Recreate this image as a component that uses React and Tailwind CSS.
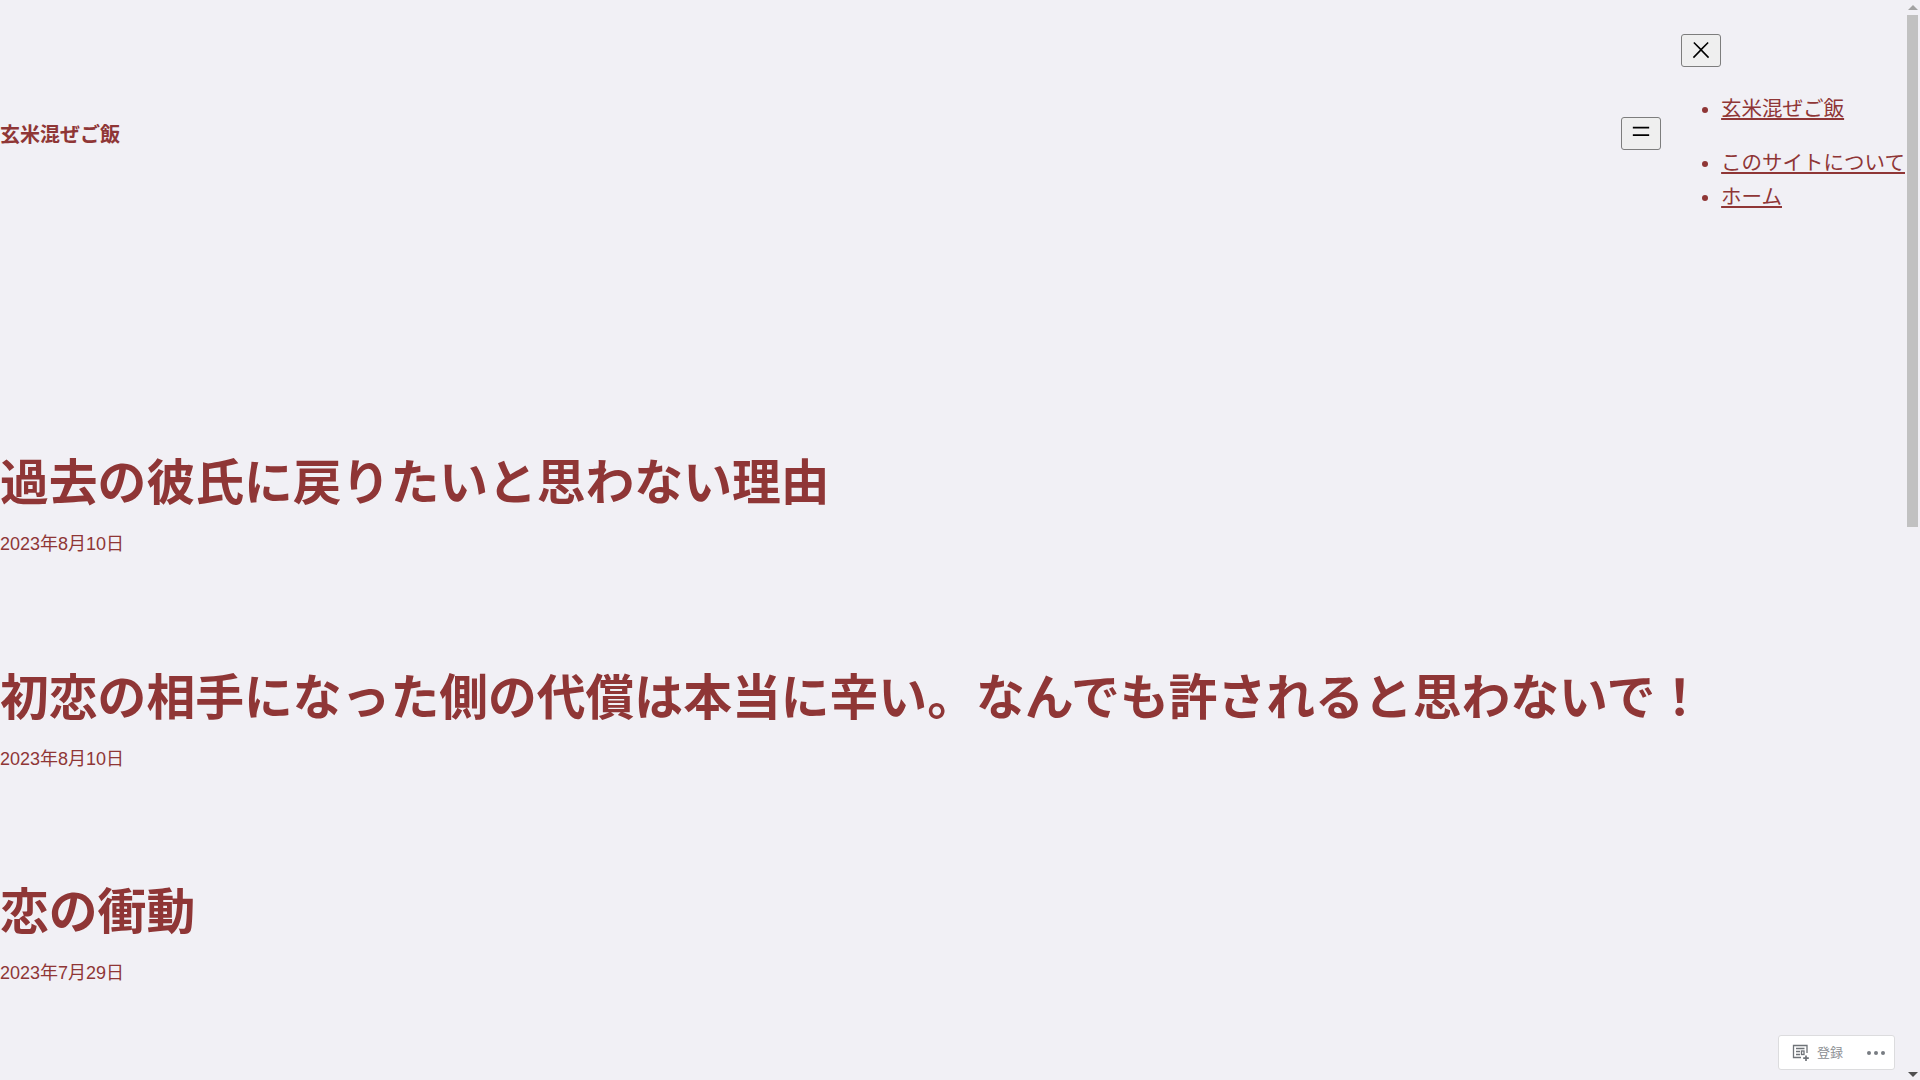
const posts = [
    { title: '過去の彼氏に戻りたいと思わない理由', date: '2023年8月10日' },
    { title: '初恋の相手になった側の代償は本当に辛い。なんでも許されると思わないで！', date: '2023年8月10日' },
    { title: '恋の衝動', date: '2023年7月29日' },
];

const menu = [
    { label: '玄米混ぜご飯', cls: 'mt-0' },
    { label: 'このサイトについて', cls: 'mt-[20px]' },
    { label: 'ホーム', cls: 'mt-0' },
];

function Scrollbar() {
    return (
        <div className="w-[15px] shrink-0 h-full flex flex-col items-center bg-[#f1f0f5] relative">
            <div className="w-0 h-0 mt-[5px] border-x-[5px] border-x-transparent border-b-[5px] border-b-[#a3a3a3]" />
            <div className="w-[11px] h-[512px] mt-[5px] bg-[#c1c1c1]" />
            <div className="absolute bottom-[3px] w-0 h-0 border-x-[5px] border-x-transparent border-t-[5px] border-t-[#505050]" />
        </div>
    );
}

function ActionBar() {
    return (
        <div className="absolute right-[25px] bottom-[10px] w-[117px] h-[35px] bg-white rounded-[3px] border border-[#dcdcde] flex items-center pl-[13px] text-[#8c8f94]">
            <svg width="18" height="18" viewBox="0 0 18 18" className="shrink-0 text-[#6f7378]" fill="none" stroke="currentColor" strokeWidth="1.3">
                <path d="M15 9V1.5H1.5v12H9" />
                <path d="M4 4.5h8.5M4 7.5h4M4 10.5h4" />
                <rect x="9.5" y="7" width="2.5" height="3.5" />
                <path d="M14 11.5v5.5M11.2 14.2h5.6" strokeWidth="1.7" />
            </svg>
            <span className="ml-[7px] text-[13px] leading-none">登録</span>
            <div className="ml-auto mr-[9px] flex gap-[3px]">
                <span className="w-[4px] h-[4px] rounded-full bg-[#787c82]" />
                <span className="w-[4px] h-[4px] rounded-full bg-[#787c82]" />
                <span className="w-[4px] h-[4px] rounded-full bg-[#787c82]" />
            </div>
        </div>
    );
}

export default function App() {
    return (
        <div className="h-screen overflow-hidden flex relative bg-[#f1f0f5] text-[#8f3636] font-['Liberation_Sans','Noto_Sans_CJK_JP',sans-serif]">
            <div className="flex-1 min-w-0">
                <header className="flex items-start justify-between h-[420px]">
                    <p className="mt-[123px] text-[20px] leading-[24px] font-bold">玄米混ぜご飯</p>
                    <div className="flex items-start">
                        <button className="mt-[117px] mr-[20px] w-[40px] h-[33px] rounded-[3px] border border-[#7d7d7d] bg-[#efefef] flex items-center justify-center">
                            <svg width="28" height="28" viewBox="0 0 24 24" fill="#000" className="mt-[2px]">
                                <path d="M5 5v1.5h14V5H5zm0 7.8h14v-1.5H5v1.5z" />
                            </svg>
                        </button>
                        <div className="pt-[34px]">
                            <button className="w-[40px] h-[33px] rounded-[3px] border border-[#7d7d7d] bg-[#efefef] flex items-center justify-center text-black">
                                <svg width="26" height="26" viewBox="0 0 24 24" fill="currentColor" className="-mt-[2px]">
                                    <path d="M13 11.8l6.1-6.3-1-1-6.1 6.2-6.1-6.2-1 1 6.1 6.3-6.5 6.7 1 1 6.5-6.6 6.5 6.6 1-1z" />
                                </svg>
                            </button>
                            <ul className="mt-[25px] pl-[40px] list-disc text-[20.5px] leading-[34px]">
                                {menu.map((item) => (
                                    <li key={item.label} className={item.cls}>
                                        <a href="#" className="underline decoration-[2px] underline-offset-[2px]">{item.label}</a>
                                    </li>
                                ))}
                            </ul>
                        </div>
                    </div>
                </header>

                <main className="flex flex-col gap-[111.5px] mt-[34px]">
                    {posts.map((post) => (
                        <article key={post.title}>
                            <h2 className="text-[48.8px] leading-[58px] font-bold">{post.title}</h2>
                            <p className="mt-[20px] text-[18px] leading-[25px]">{post.date}</p>
                        </article>
                    ))}
                </main>
            </div>
            <Scrollbar />
            <ActionBar />
        </div>
    );
}
